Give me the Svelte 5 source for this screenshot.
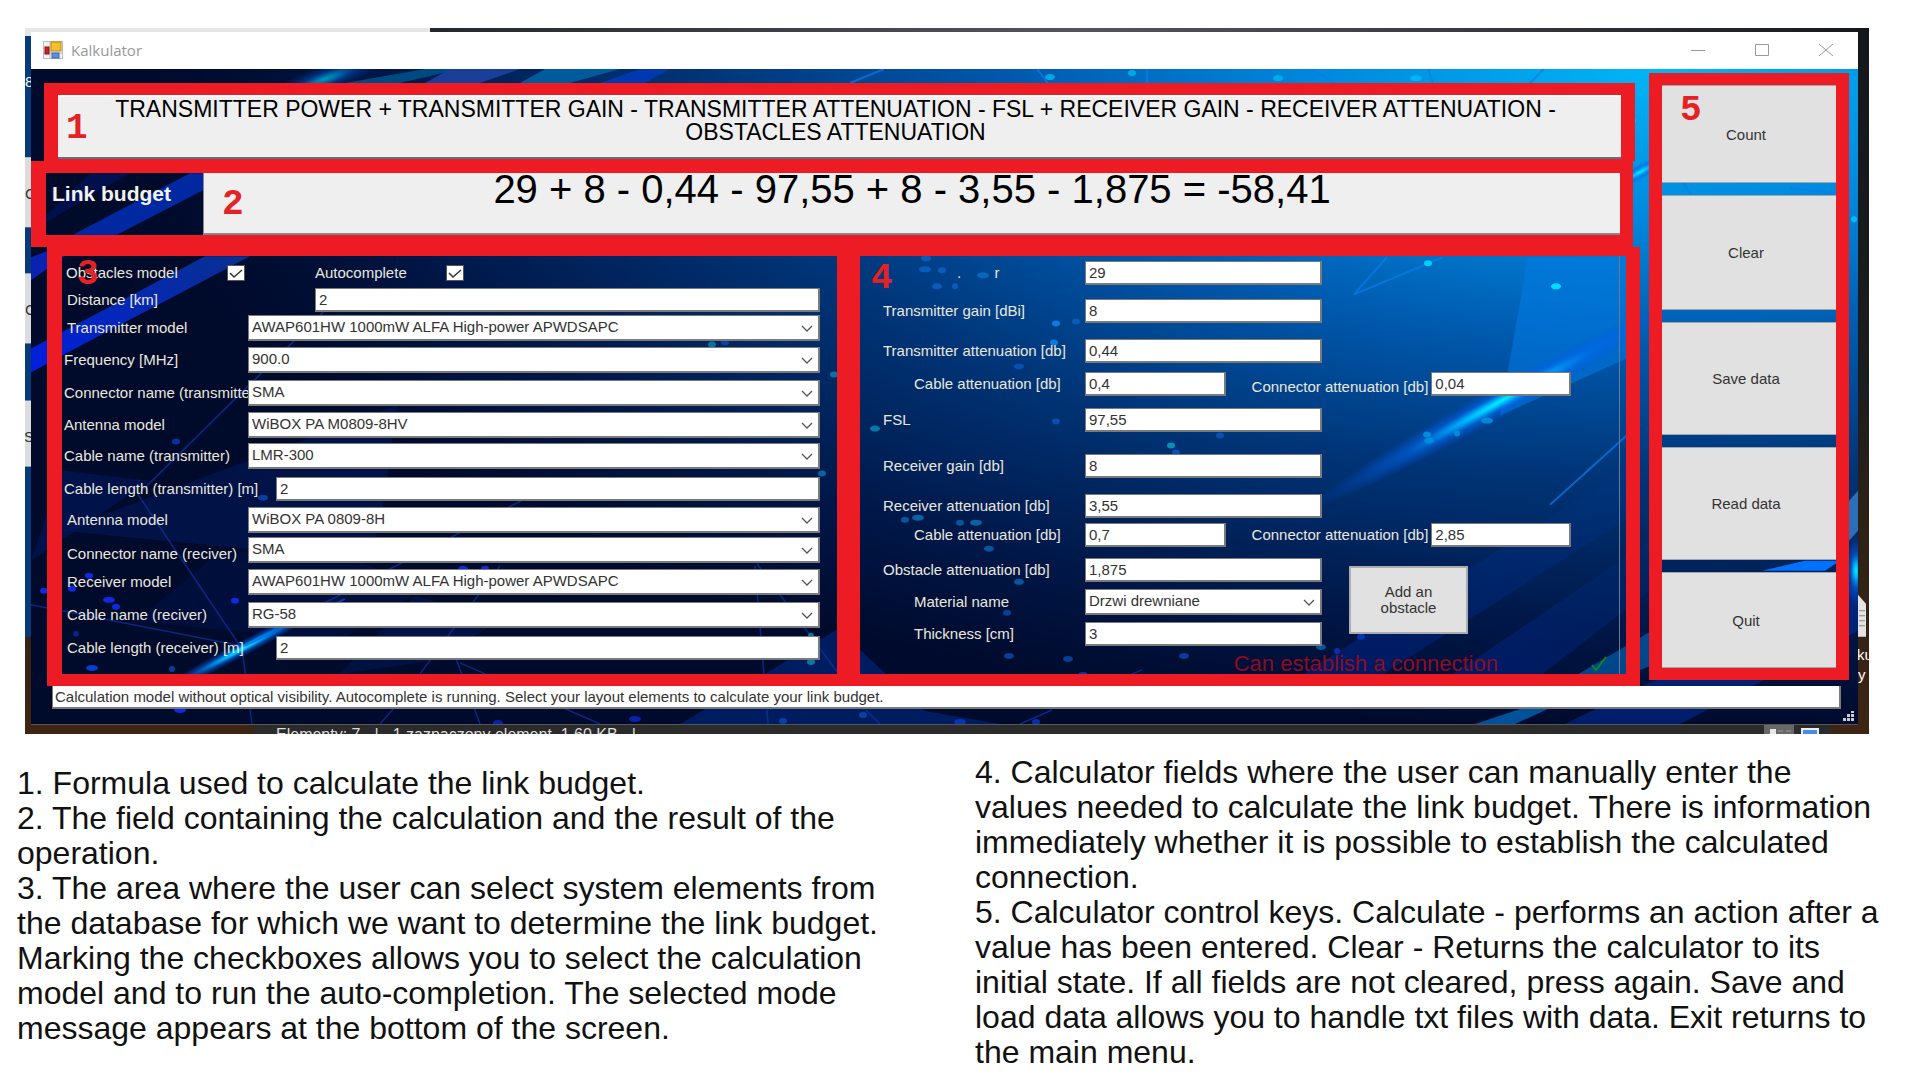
<script>
  const elementRows = [
    { id: 'distance', label: 'Distance [km]', value: '2', kind: 'far' },
    { id: 'tx-model', label: 'Transmitter model', value: 'AWAP601HW 1000mW ALFA High-power APWDSAPC', kind: 'select' },
    { id: 'freq', label: 'Frequency [MHz]', value: '900.0', kind: 'select', out: true },
    { id: 'tx-conn', label: 'Connector name (transmitter', value: 'SMA', kind: 'select', out: true },
    { id: 'tx-ant', label: 'Antenna model', value: 'WiBOX PA M0809-8HV', kind: 'select', out: true },
    { id: 'tx-cable', label: 'Cable name (transmitter)', value: 'LMR-300', kind: 'select', out: true },
    { id: 'tx-len', label: 'Cable length (transmitter) [m]', value: '2', kind: 'near', out: true },
    { id: 'rx-ant', label: 'Antenna model', value: 'WiBOX PA 0809-8H', kind: 'select' },
    { id: 'rx-conn', label: 'Connector name (reciver)', value: 'SMA', kind: 'select', low: true },
    { id: 'rx-model', label: 'Receiver model', value: 'AWAP601HW 1000mW ALFA High-power APWDSAPC', kind: 'select' },
    { id: 'rx-cable', label: 'Cable name (reciver)', value: 'RG-58', kind: 'select' },
    { id: 'rx-len', label: 'Cable length (receiver) [m]', value: '2', kind: 'near' }
  ];

  const valueRows = [
    { id: 'power', label: '.        r', value: '29', dots: true },
    { id: 'tgain', label: 'Transmitter gain [dBi]', value: '8' },
    { id: 'tatt', label: 'Transmitter attenuation [db]', value: '0,44' },
    { id: 'tcab', label: 'Cable attenuation [db]', value: '0,4', second: '0,04', low: true },
    { id: 'fsl', label: 'FSL', value: '97,55' },
    { id: 'rgain', label: 'Receiver gain [db]', value: '8' },
    { id: 'ratt', label: 'Receiver attenuation [db]', value: '3,55' },
    { id: 'rcab', label: 'Cable attenuation [db]', value: '0,7', second: '2,85' },
    { id: 'oatt', label: 'Obstacle attenuation [db]', value: '1,875' },
    { id: 'mat', label: 'Material name', value: 'Drzwi drewniane', select: true, indent: true },
    { id: 'thick', label: 'Thickness [cm]', value: '3', indent: true }
  ];

  const actions = ['Count', 'Clear', 'Save data', 'Read data', 'Quit'];

  // x, y, rx, colour of the glowing dots in the wallpaper
  const dots = [
    [1050, 77, 5, '#00b4ee'], [1132, 73, 4, '#00b4ee'], [1278, 78, 5, '#00b4ee'], [1416, 78, 6, '#00b8f4'],
    [925, 269, 6, '#0a62c4'], [942, 270, 4, '#0a62c4'], [983, 275, 6, '#0a6cc8'], [937, 286, 5, '#0a62c4'],
    [955, 286, 3, '#0a62c4'], [926, 258, 5, '#0a62c4'], [1056, 323, 4, '#0a86f0'], [1076, 321, 4, '#0862c0'],
    [1054, 342, 4, '#0a86f0'], [1019, 366, 5, '#0854b8'], [1056, 421, 4, '#0854b8'], [875, 428, 5, '#0a86b4'],
    [1171, 445, 4, '#0aa0c0'], [1176, 452, 4, '#0858c0'], [1220, 435, 4, '#0858c0'], [1428, 263, 4, '#00e0ff'],
    [1556, 286, 5, '#00f0ff'], [1487, 420, 6, '#0096e0'], [1427, 434, 4, '#0096e0'], [1429, 440, 5, '#0090e0'],
    [1457, 433, 3, '#0096e0'], [712, 344, 4, '#0a80b0'], [725, 342, 4, '#0848b0'], [834, 374, 4, '#0a80b0'],
    [822, 473, 4, '#0a70b0'], [918, 517, 6, '#0a70b0'], [905, 519, 4, '#0862a8'], [960, 522, 4, '#0862a8'],
    [976, 522, 6, '#0a70b0'], [989, 548, 5, '#0862a8'], [1019, 581, 5, '#0862a8'], [1007, 612, 4, '#0848a8'],
    [1009, 655, 5, '#0848a8'], [1068, 658, 5, '#0848a8'], [1184, 655, 5, '#0848a8'], [1083, 674, 5, '#0848a8'],
    [1321, 646, 5, '#0862a8'], [1337, 650, 3, '#0838c0'], [1361, 636, 4, '#0838c0'],
    [89, 575, 4, '#1030ff'], [72, 588, 4, '#1030ff'], [109, 599, 6, '#1030ff'], [116, 606, 4, '#1030ff'],
    [44, 590, 4, '#1030ff'], [235, 600, 4, '#1030ff'], [92, 667, 6, '#0848f0'], [172, 668, 3, '#0848b0'],
    [263, 497, 5, '#0848b0'], [176, 441, 4, '#0838b0'], [180, 709, 6, '#1030ff'], [463, 568, 5, '#1030ff'],
    [485, 568, 4, '#1030ff'], [811, 635, 3, '#0a88b0'], [811, 661, 4, '#0a88b0'], [498, 722, 5, '#0a28c0'],
    [635, 718, 6, '#0a28c0'], [783, 720, 4, '#0848b0'], [863, 714, 4, '#0848b0'], [960, 721, 6, '#0a38c0'],
    [1036, 721, 4, '#0838c0'], [1633, 121, 3, '#00c8ff'], [1854, 219, 3, '#00c8ff'], [76, 633, 3, '#0828a0']
  ];
</script>

{#snippet chevron()}
  <svg class="chev" viewBox="0 0 12 8" aria-hidden="true"><path d="M1 1 L6 6 L11 1" fill="none" stroke="#555" stroke-width="1.3" /></svg>
{/snippet}

<main>
  <div class="shot">
    <svg class="desk" viewBox="25 28 1844 705" preserveAspectRatio="none" aria-hidden="true">
      <defs>
        <linearGradient id="wall" x1="0" y1="0" x2="0" y2="1">
          <stop offset="0" stop-color="#14181b" /><stop offset=".5" stop-color="#1b1d1e" />
          <stop offset=".68" stop-color="#2c2117" /><stop offset="1" stop-color="#3e2413" />
        </linearGradient>
        <linearGradient id="rim"><stop offset="0" stop-color="#23282e" /><stop offset=".45" stop-color="#55545e" /><stop offset=".7" stop-color="#3c3c46" /><stop offset="1" stop-color="#14181b" /></linearGradient>
      </defs>
      <rect x="25" y="28" width="1844" height="705" fill="url(#wall)" />
      <rect x="430" y="28" width="1439" height="4" fill="url(#rim)" />
      <rect x="25" y="28" width="405" height="8" fill="#e6e6e6" />
      <rect x="25" y="36" width="6" height="600" fill="#063a78" />
      <rect x="25" y="157" width="6" height="70" fill="#dcdcdc" />
      <rect x="25" y="273" width="6" height="70" fill="#dcdcdc" />
      <rect x="25" y="400" width="6" height="66" fill="#dcdcdc" />
      <path d="M1858 594 l8 9 v33 h-8z" fill="#e4e4e4" /><path d="M1859 610h6m-6 5h6m-6 5h6m-6 5h6" stroke="#888" />
      <text x="25" y="87" font-size="15" fill="#fff">8</text>
      <text x="25" y="199" font-size="15" fill="#333">C</text>
      <text x="25" y="315" font-size="15" fill="#333">C</text>
      <text x="24" y="441" font-size="15" fill="#333">S</text>
      <text x="1857" y="659" font-size="15" fill="#fff">ku</text>
      <text x="1858" y="679" font-size="15" fill="#fff">y</text>
    </svg>

    <div class="window">
      <header>
        <svg class="logo" viewBox="0 0 20 18" aria-hidden="true">
          <rect x=".5" y=".5" width="19" height="17" fill="#f4f4f4" stroke="#bbb" />
          <path d="M7 0v18M0 12h20" stroke="#bbb" />
          <rect x="8" y="1" width="10" height="9" fill="#f5c02c" stroke="#b98a10" />
          <rect x="2" y="6" width="4" height="7" fill="#c8201c" stroke="#8d1512" />
          <rect x="9" y="12" width="7" height="5" fill="#5b8fe6" stroke="#3565b8" />
        </svg>
        <h1>Kalkulator</h1>
        <nav>
          <button aria-label="Minimize"><svg viewBox="0 0 16 16"><path d="M1 8.500H15" /></svg></button>
          <button aria-label="Maximize"><svg viewBox="0 0 16 16"><path d="M1.500 2.500H14.500V13.500H1.500Z" /></svg></button>
          <button aria-label="Close"><svg viewBox="0 0 16 16"><path d="M1 2L15 14M15 2L1 14" /></svg></button>
        </nav>
      </header>

      <div class="client">
        <svg class="paper" viewBox="31 69 1827 654" preserveAspectRatio="none" aria-hidden="true">
          <defs>
            <radialGradient id="sky" gradientUnits="userSpaceOnUse" cx="0" cy="0" r="1" gradientTransform="translate(1660 70) scale(1560 660)">
              <stop offset="0" stop-color="#00b6f6" /><stop offset=".22" stop-color="#0088de" />
              <stop offset=".42" stop-color="#0058ac" /><stop offset=".62" stop-color="#003476" />
              <stop offset=".84" stop-color="#001748" /><stop offset="1" stop-color="#000a2c" />
            </radialGradient>
            <radialGradient id="glow"><stop offset="0" stop-color="#00f4ff" /><stop offset=".2" stop-color="#00b4ff" stop-opacity=".95" /><stop offset=".5" stop-color="#0068f0" stop-opacity=".55" /><stop offset="1" stop-color="#0050e0" stop-opacity="0" /></radialGradient>
            <linearGradient id="ray" x1="0" y1="1" x2="1" y2="0"><stop offset="0" stop-color="#001ee0" /><stop offset="1" stop-color="#0a36a0" stop-opacity=".85" /></linearGradient>
            <linearGradient id="dim" x1="0" y1="1" x2="1" y2="0"><stop offset="0" stop-color="#0026a0" stop-opacity=".45" /><stop offset="1" stop-color="#003c9c" stop-opacity=".1" /></linearGradient>
            <linearGradient id="edge"><stop offset="0" stop-color="#000a2a" /><stop offset="1" stop-color="#000a2a" stop-opacity="0" /></linearGradient>
          </defs>
          <rect x="31" y="69" width="1827" height="654" fill="url(#sky)" />
          <rect x="31" y="69" width="420" height="654" fill="url(#edge)" />
          <path d="M345 83 L425 69 H460 L400 83Z" fill="#004a82" /><path d="M520 83 L545 69 H620 L570 83Z" fill="#005a9c" />
          <path d="M425 83 L450 69 H520 L480 83Z" fill="#1a3f98" /><path d="M600 83 L640 69 H670 L645 83Z" fill="#0038b0" />
          <ellipse cx="325" cy="79" rx="65" ry="14" fill="url(#glow)" opacity=".6" transform="rotate(-20 325 79)" />
          <path d="M72 235 L190 173 H203 V190 L116 235Z" fill="#0028a0" />
          <path d="M46 215 L90 173 H130 L46 222Z" fill="#001466" opacity=".6" />
          <path d="M31 372 V348 L205 256 H250 L62 355Z" fill="url(#ray)" /><path d="M31 280V257L62 245H80Z" fill="#0a22b0" />
          <path d="M140 500 L397 405 L385 495 L370 560 L62 530Z" fill="#001a62" opacity=".5" />
          <path d="M31 560 L150 480 L62 470Z" fill="#001a6a" opacity=".5" />
          <path d="M135 621 L215 555 L320 540 L420 590 L340 640Z" fill="#00165a" opacity=".35" />
          <path d="M340 673 L415 595 L500 620 L430 660Z" fill="#001e6a" opacity=".4" />
          <path d="M765 673 L838 628 L925 710 L1000 723 H680Z" fill="#002884" opacity=".6" />
          <g stroke="#0a3ab0" stroke-width="1.500" fill="none" opacity=".65">
            <path d="M138 494 L242 648 L252 723 M325 310 L138 494 M31 604 L242 645 L560 480 M420 673 L500 565 M455 655 L480 723 M460 662 L600 723 M755 565 L768 723 M757 563 L838 672 M1020 723 L1052 709 M1128 675 L1142 669 M866 709 L880 723 M400 700 L380 723" />
          </g>
          <g stroke="#0a7cec" stroke-width="2" fill="none" opacity=".7">
            <path d="M850 83 L884 69 M1037 69 L1048 83 M1147 69V83 M1311 69 L1335 83 M1428 69 L1433 83 M1544 69L1530 83 M1387 257 L1354 294 L1443 257 M1640 423 L1550 504 M1683 183 L1692 196 M1790 188 L1838 193" />
          </g>
          <path d="M1528 257 H1640 V352 L1500 415Z" fill="#007ce6" opacity=".55" />
          <ellipse cx="1500" cy="401" rx="215" ry="16" fill="url(#glow)" transform="rotate(-29 1500 401)" />
          <ellipse cx="1640" cy="172" rx="50" ry="8" fill="url(#glow)" transform="rotate(-29 1640 172)" />
          <path d="M1300 675 L1640 460 V510 L1380 675Z" fill="url(#dim)" /><path d="M1450 675 L1650 540 V590 L1540 675Z" fill="url(#dim)" />
          <path d="M1575 675 L1650 631 V665 L1625 675Z" fill="#0064b4" opacity=".65" />
          <path d="M1565 723 L1858 580 V630 L1680 723Z" fill="#0030a8" opacity=".5" /><path d="M1475 723 L1520 708 H1548 L1515 723Z" fill="#00509a" />
          <path d="M1762 570 L1805 560 H1840 L1825 570Z" fill="#0070ff" /><path d="M1849 500 L1858 490 V530 L1849 540Z" fill="#2a70b8" />
          <ellipse cx="1856" cy="570" rx="12" ry="36" fill="url(#glow)" />
          <ellipse cx="242" cy="648" rx="112" ry="8" fill="url(#glow)" transform="rotate(-28 242 648)" />
          <path d="M245 645 L345 598" stroke="#0060f0" stroke-width="2" opacity=".6" />
          {#each dots as [x, y, r, c]}
            <ellipse cx={x} cy={y} rx={r} ry="3" fill={c} opacity=".85" />
          {/each}
        </svg>

        <div class="work">
          <section class="formula">
            <span class="num">1</span>
            <p>TRANSMITTER POWER + TRANSMITTER GAIN - TRANSMITTER ATTENUATION - FSL + RECEIVER GAIN - RECEIVER ATTENUATION -<br />OBSTACLES ATTENUATION</p>
          </section>

          <section class="budget">
            <h2>Link budget</h2>
            <div class="result">
              <span class="num">2</span>
              <output>29 + 8 - 0,44 - 97,55 + 8 - 3,55 - 1,875 = -58,41</output>
            </div>
          </section>

          <div class="panels">
            <form class="elements">
              <span class="num">3</span>
              <div class="checks">
                <label for="obs">Obstacles model</label>
                <span class="tick"><input id="obs" type="checkbox" checked /><svg viewBox="0 0 18 16" aria-hidden="true"><path d="M3 8L7 12L15 5" /></svg></span>
                <label for="auto">Autocomplete</label>
                <span class="tick"><input id="auto" type="checkbox" checked /><svg viewBox="0 0 18 16" aria-hidden="true"><path d="M3 8L7 12L15 5" /></svg></span>
              </div>
              {#each elementRows as row}
                <div class="row {row.kind}" class:out={row.out}>
                  <label for={row.id} class:low={row.low}>{row.label}</label>
                  {#if row.kind === 'select'}
                    <span class="pick"><select id={row.id}><option>{row.value}</option></select>{@render chevron()}</span>
                  {:else}
                    <input id={row.id} type="text" value={row.value} />
                  {/if}
                </div>
              {/each}
            </form>

            <form class="values">
              <span class="num">4</span>
              <div class="group">
                {#each valueRows as row}
                  <div class="vrow">
                    <label for={row.id} class:indent={row.indent || row.second} class:dots={row.dots}>{row.label}</label>
                    {#if row.select}
                      <span class="pick full"><select id={row.id}><option>{row.value}</option></select>{@render chevron()}</span>
                    {:else}
                      <input id={row.id} class:full={!row.second} type="text" value={row.value} />
                    {/if}
                    {#if row.second}
                      <label for="{row.id}2" class="side" class:low={row.low}>Connector attenuation [db]</label>
                      <input id="{row.id}2" type="text" value={row.second} />
                    {/if}
                  </div>
                {/each}
                <div class="message">
                  <output>Can establish a connection</output>
                  <svg viewBox="0 0 16 16" aria-hidden="true"><path d="M1 9L5 14L15 1" fill="none" stroke="#078a1c" stroke-width="2" /></svg>
                </div>
                <button type="button" class="add">Add an obstacle</button>
              </div>
            </form>
          </div>
        </div>

        <aside>
          <span class="num">5</span>
          {#each actions as action}
            <button>{action}</button>
          {/each}
        </aside>

        <input class="status" type="text" aria-label="Status" readonly value="Calculation model without optical visibility. Autocomplete is running. Select your layout elements to calculate your link budget." />
        <svg class="grip" viewBox="0 0 12 10" aria-hidden="true"><path d="M0 7h3v3H0zM4 7h3v3H4zM8 7h3v3H8zM4 3h3v3H4zM8 3h3v3H8zM8 0h3v2H8z" fill="#c8ccd4" /></svg>
      </div>
    </div>

    <footer>
      <span>Elementy: 7</span><span>|</span><span>1 zaznaczony element&nbsp; 1,60 KB</span><span>|</span>
      <svg viewBox="0 0 60 10" aria-hidden="true">
        <rect width="30" height="10" fill="#686868" /><rect x="6" y="4" width="6" height="6" fill="#e8e8e8" /><path d="M14 6h5m3 0h5" stroke="#999" />
        <rect x="37" y="3" width="18" height="7" fill="#e8f0fa" /><rect x="39" y="5" width="14" height="5" fill="#4a8ce0" />
      </svg>
    </footer>
  </div>

  <div class="notes">
    <div class="left">
      <p>1. Formula used to calculate the link budget.</p>
      <p>2. The field containing the calculation and the result of the<br />operation.</p>
      <p>3. The area where the user can select system elements from<br />the database for which we want to determine the link budget.<br />Marking the checkboxes allows you to select the calculation<br />model and to run the auto-completion. The selected mode<br />message appears at the bottom of the screen.</p>
    </div>
    <div class="right">
      <p>4. Calculator fields where the user can manually enter the<br />values needed to calculate the link budget. There is information<br />immediately whether it is possible to establish the calculated<br />connection.</p>
      <p>5. Calculator control keys. Calculate - performs an action after a<br />value has been entered. Clear - Returns the calculator to its<br />initial state. If all fields are not cleared, press again. Save and<br />load data allows you to handle txt files with data. Exit returns to<br />the main menu.</p>
    </div>
  </div>
</main>

<style>
  :global(body) { margin: 0; background: #fff; }
  * { box-sizing: border-box; }
  main { font-family: 'Liberation Sans', Arial, sans-serif; padding-top: 28px; color: #111; }
  p, h1, h2 { margin: 0; font-weight: 400; }
  button, input, select { font: inherit; border-radius: 0; }

  .shot { position: relative; margin: 0 51px 0 25px; padding: 4px 11px 0 6px; font-size: 15px; }
  .desk { position: absolute; inset: 0; width: 100%; height: 100%; }
  .window { position: relative; border-bottom: 1px solid #555; }
  header { display: flex; align-items: center; height: 37px; padding: 0 16px 2px 12px; background: #fff; }
  .logo { width: 20px; height: 18px; }
  h1 { flex: 1; padding-left: 8px; font: 15px 'Open Sans', sans-serif; color: #999; }
  nav { display: flex; gap: 32px; }
  nav button { width: 32px; height: 32px; padding: 8px; border: 0; background: none; }
  nav svg { display: block; width: 16px; height: 16px; fill: none; stroke: #999; }

  .client {
    position: relative;
    display: grid;
    grid-template-columns: minmax(0, 1fr) 200px;
    column-gap: 9px;
    padding: 0 9px 15px 0;
    background: #00103a;
  }
  .paper { position: absolute; inset: 0; width: 100%; height: 100%; }
  .work { position: relative; padding-top: 14px; }
  .num {
    position: absolute;
    font: bold 36px/36px 'Liberation Mono', monospace;
    color: #e32226;
    z-index: 2;
  }

  .formula {
    position: relative;
    height: 78px;
    margin: 0 5px 0 13px;
    border: solid #ed1c24;
    border-width: 12px 14px 2px;
    background: #efefef;
    box-shadow: inset 0 2px #fff, inset 0 -2px #5f6f80;
    padding-top: 3px;
    text-align: center;
    font-size: 23px;
    line-height: 23px;
    color: #000;
    white-space: nowrap;
  }
  .formula p { padding-right: 8px; }
  .formula .num { left: 8px; top: 16px; }
  .budget {
    display: flex;
    height: 86px;
    margin-right: 7px;
    border: solid #ed1c24;
    border-width: 12px 13px 12px 15px;
  }
  h2 { width: 157px; padding: 7px 0 0 6px; font-size: 21px; line-height: 28px; font-weight: 700; color: #f4f2ee; }
  .result {
    position: relative;
    flex: 1;
    background: #efefef;
    box-shadow: inset 0 -2px #888;
    border-left: 1px solid #888;
    text-align: center;
    font-size: 40px;
    line-height: 32px;
    color: #000;
    white-space: nowrap;
  }
  .result .num { left: 18px; top: 14px; }

  .panels { display: grid; grid-template-columns: 802fr 791fr; margin-left: 16px; }
  .elements {
    position: relative;
    display: grid;
    grid-template-rows: 31px 28px 32px 33px 32px 31px 33px 31px 30px 32px 33px 33px 38px;
    padding-right: 17px;
    border: solid #ed1c24;
    border-width: 9px 12px 12px 15px;
  }
  .elements .num { left: 15px; top: 1px; }
  .values { position: relative; border: solid #ed1c24; border-width: 9px 14px 12px 11px; }
  .values .num { left: 11px; top: 5px; }
  label { color: #ebe7df; white-space: nowrap; line-height: 18px; }
  .low { align-self: flex-end; }

  .checks { display: grid; grid-template-columns: 165px 88px 131px 18px; align-items: center; padding-top: 2px; }
  .checks label { padding-left: 4px; }
  .checks label:nth-of-type(2) { padding-left: 0; }
  .tick { position: relative; display: block; width: 18px; height: 16px; }
  .tick input { appearance: none; display: block; margin: 0; width: 18px; height: 16px; border: 1px solid #555; background: #fff; }
  .tick svg { position: absolute; inset: 0; fill: none; stroke: #333; stroke-width: 1.5; pointer-events: none; }

  .row { display: flex; align-items: center; align-self: start; height: 26px; }
  .row label { flex: 0 0 186px; min-width: 0; padding-left: 5px; }
  .row.near label { flex-basis: 214px; }
  .row.far label { flex-basis: 253px; }
  .row.out label { padding-left: 2px; }
  .row > input, .pick { flex: 1; }
  input[type='text'], select {
    position: relative;
    display: block;
    width: 100%;
    min-width: 0;
    height: 24px;
    margin: 0;
    padding: 0 3px;
    border: 2px solid #7a7a7a;
    border-width: 1px 2px 2px 1px;
    background: #fff;
    color: #333;
    font-size: 15px;
    line-height: 18px;
  }
  .pick { position: relative; display: block; }
  select { appearance: none; height: 26px; padding-bottom: 2px; }
  .chev { position: absolute; right: 7px; top: 10px; width: 12px; height: 8px; pointer-events: none; }

  .group {
    position: relative;
    display: grid;
    grid-template-rows: 38px 40px 33px 36px 46px 40px 29px 35px 31px 33px 32px 20px;
    margin-right: 6px;
    padding-top: 5px;
    border-right: 1px solid #6a7a94;
  }
  .vrow, .message { display: grid; grid-template-columns: 225px 141fr 96fr 110fr 140fr 48fr; align-items: center; align-self: start; min-height: 24px; }
  .vrow label { padding-left: 23px; }
  .vrow label.indent { padding-left: 54px; }
  .vrow label.dots { padding-left: 97px; white-space: pre; }
  .full { grid-column: 2 / 4; }
  .vrow label.side { grid-column: 3 / 5; padding: 0 3px 0 0; text-align: right; }
  .message { color: #8c0c24; font-size: 22px; line-height: 20px; min-height: 20px; }
  .message output { grid-column: 3 / 6; padding-left: 8px; }
  .message svg { width: 16px; height: 16px; justify-self: end; margin-right: 12px; }
  .add {
    grid-area: 9 / 1 / 12 / 2;
    justify-self: end;
    width: 119px;
    height: 68px;
    margin: 8px 151px 0 0;
    padding: 0 16px;
    border: 2px solid #adadad;
    background: #e1e1e1;
    color: #333;
    line-height: 16px;
  }
  .vrow, .message { grid-column: 1; }
  .vrow:nth-child(1) { grid-row: 1; }
  .vrow:nth-child(2) { grid-row: 2; }
  .vrow:nth-child(3) { grid-row: 3; }
  .vrow:nth-child(4) { grid-row: 4; }
  .vrow:nth-child(5) { grid-row: 5; }
  .vrow:nth-child(6) { grid-row: 6; }
  .vrow:nth-child(7) { grid-row: 7; }
  .vrow:nth-child(8) { grid-row: 8; }
  .vrow:nth-child(9) { grid-row: 9; }
  .vrow:nth-child(10) { grid-row: 10; }
  .vrow:nth-child(11) { grid-row: 11; }
  .message { grid-row: 12; }

  aside {
    position: relative;
    display: grid;
    grid-template-rows: 98fr 115fr 113fr 113fr 96fr;
    gap: 12px;
    margin: 4px 0 6px;
    border: solid #ed1c24;
    border-width: 12px 13px;
  }
  aside .num { left: 18px; top: 8px; }
  aside button { padding: 0 6px 0 0; border: solid #a0a4ac; border-width: 1px 0; background: #e1e1e1; color: #333; }

  input.status { grid-column: 1 / 3; width: auto; height: 23px; margin: 0 8px 0 21px; padding: 0 2px 1px; border-top: 0; }
  .grip { position: absolute; right: 3px; bottom: 3px; width: 12px; height: 10px; }

  footer {
    position: relative;
    display: flex;
    gap: 14px;
    height: 9px;
    margin: 0 27px 0 223px;
    padding-left: 22px;
    overflow: hidden;
    background: #2b2b2b;
    color: #ddd;
    font-size: 16px;
    line-height: 20px;
  }
  footer svg { width: 60px; height: 10px; margin-left: auto; margin-right: 7px; }

  .notes { display: grid; grid-template-columns: 975fr 945fr; font-size: 32px; line-height: 35px; white-space: nowrap; }
  .left { padding: 32px 0 0 17px; }
  .right { padding-top: 21px; }
</style>
